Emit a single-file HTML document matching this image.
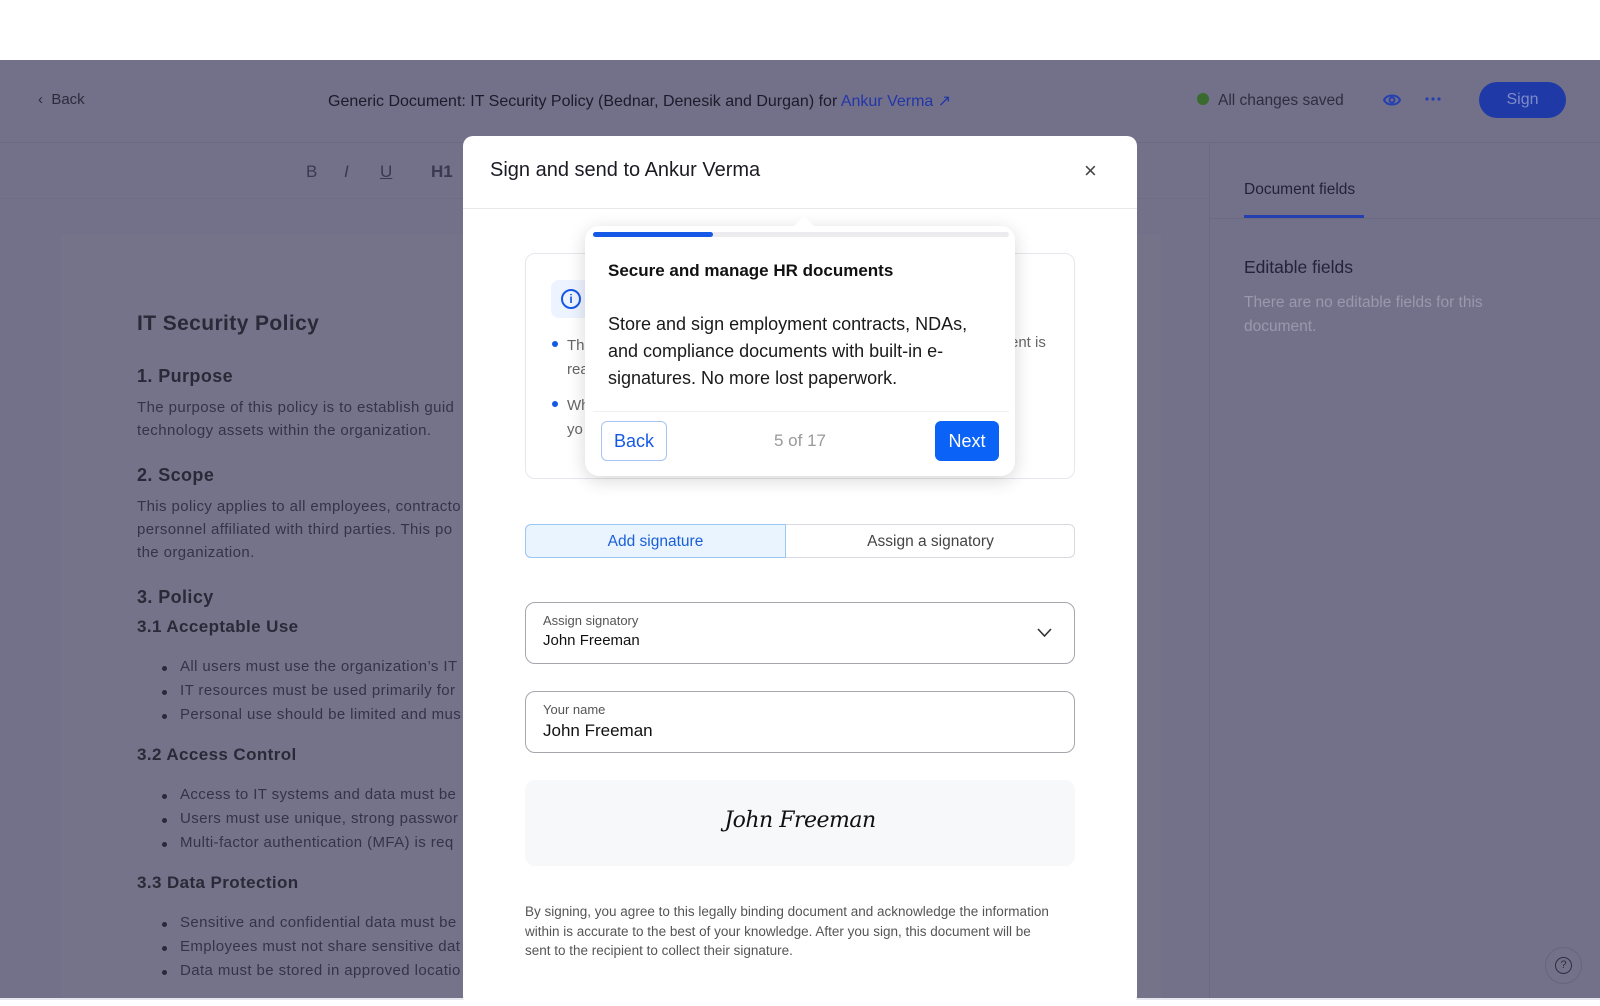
<!DOCTYPE html>
<html><head><meta charset="utf-8"><style>
*{box-sizing:border-box;margin:0;padding:0}
body{width:1600px;height:1000px;overflow:hidden;background:#fff;font-family:"Liberation Sans",sans-serif;position:relative}
.abs{position:absolute;white-space:nowrap}
.ov{position:absolute;left:0;top:60px;width:1600px;height:938px;background:#737189}
.doc{font-family:"Liberation Sans",sans-serif;color:#2a2938;letter-spacing:.4px}
.h2{font-size:18px;font-weight:bold}
.h3{font-size:17px;font-weight:bold}
.p{font-size:15px;color:#34334a}
.li{font-size:15px;color:#34334a}
.li:before{content:"";position:absolute;left:-18px;top:8px;width:5px;height:5px;border-radius:50%;background:#2a2938}
</style></head><body>
<div class="ov"></div>
<!-- header -->
<div class="abs" style="left:38px;top:91px;font-size:15px;color:#2c2b3c">‹&nbsp; Back</div>
<div class="abs" style="left:328px;top:91px;font-size:16px;color:#1c1b2a">Generic Document: IT Security Policy (Bednar, Denesik and Durgan) for <span style="color:#2336a8">Ankur Verma ↗</span></div>
<div class="abs" style="left:1197px;top:93px;width:12px;height:12px;border-radius:50%;background:#3a6a2e"></div>
<div class="abs" style="left:1218px;top:92px;font-size:15.5px;color:#2e2d40">All changes saved</div>
<svg class="abs" style="left:1382px;top:91px" width="20" height="18" viewBox="0 0 20 18"><path d="M2 9C5 3 15 3 18 9C15 15 5 15 2 9Z" fill="none" stroke="#2440b0" stroke-width="2"/><circle cx="10" cy="9" r="2.5" fill="none" stroke="#2440b0" stroke-width="2"/></svg>
<svg class="abs" style="left:1425px;top:97px" width="16" height="4" viewBox="0 0 16 4"><circle cx="2" cy="2" r="1.6" fill="#2440b0"/><circle cx="8" cy="2" r="1.6" fill="#2440b0"/><circle cx="14" cy="2" r="1.6" fill="#2440b0"/></svg>
<div class="abs" style="left:1479px;top:82px;width:87px;height:36px;border-radius:18px;background:#1f3aa6;color:#7f8bc9;font-size:16px;text-align:center;line-height:36px">Sign</div>
<div class="abs" style="left:0;top:142px;width:1600px;height:1px;background:#6b697f"></div>
<!-- toolbar -->
<div class="abs" style="left:306px;top:162px;font-size:17px;color:#3a3950">B</div>
<div class="abs" style="left:344px;top:162px;font-size:17px;color:#3a3950;font-style:italic">I</div>
<div class="abs" style="left:380px;top:162px;font-size:17px;color:#3a3950;text-decoration:underline">U</div>
<div class="abs" style="left:431px;top:162px;font-size:17px;color:#3a3950;font-weight:bold">H1</div>
<div class="abs" style="left:0;top:198px;width:1210px;height:1px;background:#6e6c82"></div>
<!-- doc page -->
<div class="abs" style="left:61px;top:235px;width:1100px;height:763px;background:#757389"></div>
<div class="doc">
<div class="abs" style="left:137px;top:312px;font-size:21px;font-weight:bold">IT Security Policy</div>
<div class="abs h2" style="left:137px;top:366px">1. Purpose</div>
<div class="abs p" style="left:137px;top:396px;line-height:23px">The purpose of this policy is to establish guid<br>technology assets within the organization.</div>
<div class="abs h2" style="left:137px;top:465px">2. Scope</div>
<div class="abs p" style="left:137px;top:495px;line-height:23px">This policy applies to all employees, contracto<br>personnel affiliated with third parties. This po<br>the organization.</div>
<div class="abs h2" style="left:137px;top:587px">3. Policy</div>
<div class="abs h3" style="left:137px;top:617px">3.1 Acceptable Use</div>
<div class="abs li" style="left:180px;top:658px">All users must use the organization’s IT</div>
<div class="abs li" style="left:180px;top:682px">IT resources must be used primarily for</div>
<div class="abs li" style="left:180px;top:706px">Personal use should be limited and mus</div>
<div class="abs h3" style="left:137px;top:745px">3.2 Access Control</div>
<div class="abs li" style="left:180px;top:786px">Access to IT systems and data must be</div>
<div class="abs li" style="left:180px;top:810px">Users must use unique, strong passwor</div>
<div class="abs li" style="left:180px;top:834px">Multi-factor authentication (MFA) is req</div>
<div class="abs h3" style="left:137px;top:873px">3.3 Data Protection</div>
<div class="abs li" style="left:180px;top:914px">Sensitive and confidential data must be</div>
<div class="abs li" style="left:180px;top:938px">Employees must not share sensitive dat</div>
<div class="abs li" style="left:180px;top:962px">Data must be stored in approved locatio</div>
</div>
<!-- right panel -->
<div class="abs" style="left:1209px;top:143px;width:1px;height:855px;background:#6c6a80"></div>
<div class="abs" style="left:1244px;top:181px;font-size:15.5px;color:#23223a">Document fields</div>
<div class="abs" style="left:1244px;top:215px;width:120px;height:3px;background:#2440b0"></div>
<div class="abs" style="left:1210px;top:218px;width:390px;height:1px;background:#6c6a80"></div>
<div class="abs" style="left:1244px;top:257px;font-size:17.5px;color:#23223a">Editable fields</div>
<div class="abs" style="left:1244px;top:291px;font-size:15.5px;line-height:24px;color:#9a98ad">There are no editable fields for this<br>document.</div>
<div class="abs" style="left:1545px;top:947px;width:37px;height:37px;border-radius:50%;border:1px solid #67657c"></div>
<div class="abs" style="left:1555px;top:957px;width:17px;height:17px;border-radius:50%;border:1.5px solid #2e2d40;font-size:11px;text-align:center;line-height:14px;color:#2e2d40">?</div>
<div class="abs" style="left:0;top:998px;width:1600px;height:2px;background:#e6e6ee"></div>
<!-- modal -->
<div class="abs" style="left:463px;top:136px;width:674px;height:870px;background:#fff;border-radius:10px"></div>
<div class="abs" style="left:490px;top:159px;font-size:20px;color:#1b1b24">Sign and send to Ankur Verma</div>
<div class="abs" style="left:1084px;top:158px;font-size:22px;color:#444;font-weight:300">×</div>
<div class="abs" style="left:463px;top:208px;width:674px;height:1px;background:#e8e8ec"></div>
<!-- info card -->
<div class="abs" style="left:525px;top:253px;width:550px;height:226px;border:1px solid #e6e7ec;border-radius:10px"></div>
<div class="abs" style="left:551px;top:280px;width:40px;height:38px;border-radius:8px;background:#eef4ff"></div>
<div class="abs" style="left:561px;top:289px;width:20px;height:20px;border-radius:50%;border:2px solid #1659e6;color:#1659e6;font-size:12px;text-align:center;line-height:16px;font-weight:bold">i</div>
<div class="abs" style="left:552px;top:341px;width:6px;height:6px;border-radius:50%;background:#1659e6"></div>
<div class="abs" style="left:567px;top:334px;font-size:15px;color:#666;line-height:24px">Th<br>rea</div>
<div class="abs" style="left:552px;top:401px;width:6px;height:6px;border-radius:50%;background:#1659e6"></div>
<div class="abs" style="left:567px;top:394px;font-size:15px;color:#666;line-height:24px">Wh<br>yo</div>
<div class="abs" style="left:1010px;top:334px;font-size:15px;color:#666">ent is</div>
<!-- tooltip -->
<div class="abs" style="left:585px;top:226px;width:430px;height:250px;background:#fff;border-radius:14px;box-shadow:0 4px 18px rgba(0,0,0,.16)"></div>
<div class="abs" style="left:797px;top:219px;width:14px;height:14px;background:#fff;transform:rotate(45deg)"></div>
<div class="abs" style="left:593px;top:232px;width:416px;height:5px;background:#ececef;border-radius:3px"></div>
<div class="abs" style="left:593px;top:232px;width:120px;height:5px;background:#1659e6;border-radius:3px"></div>
<div class="abs" style="left:608px;top:261px;font-size:17px;font-weight:bold;color:#111">Secure and manage HR documents</div>
<div class="abs" style="left:608px;top:311px;font-size:18px;line-height:27px;color:#1a1a1a">Store and sign employment contracts, NDAs,<br>and compliance documents with built-in e-<br>signatures. No more lost paperwork.</div>
<div class="abs" style="left:593px;top:411px;width:416px;height:1px;background:#f0f0f2"></div>
<div class="abs" style="left:601px;top:421px;width:66px;height:40px;border:1px solid #a9c4f4;border-radius:6px;color:#1659e6;font-size:18px;text-align:center;line-height:38px">Back</div>
<div class="abs" style="left:760px;top:431px;width:80px;text-align:center;font-size:17px;color:#999">5 of 17</div>
<div class="abs" style="left:935px;top:421px;width:64px;height:40px;background:#0b62f6;border-radius:6px;color:#fff;font-size:18px;text-align:center;line-height:40px">Next</div>
<!-- segmented -->
<div class="abs" style="left:525px;top:524px;width:550px;height:34px;border:1px solid #d7d9de;border-radius:6px"></div>
<div class="abs" style="left:525px;top:524px;width:261px;height:34px;border:1px solid #9cc6f4;background:#e9f4fe;border-radius:6px 0 0 6px;color:#1a5fd8;font-size:15.5px;text-align:center;line-height:33px">Add signature</div>
<div class="abs" style="left:786px;top:524px;width:289px;height:34px;color:#444;font-size:15.5px;text-align:center;line-height:35px">Assign a signatory</div>
<!-- select -->
<div class="abs" style="left:525px;top:602px;width:550px;height:62px;border:1px solid #a6a6ad;border-radius:10px"></div>
<div class="abs" style="left:543px;top:613px;font-size:13px;color:#555">Assign signatory</div>
<div class="abs" style="left:543px;top:632px;font-size:15px;color:#111">John Freeman</div>
<svg class="abs" style="left:1036px;top:627px" width="17" height="11" viewBox="0 0 17 11"><path d="M2 2L8.5 9L15 2" fill="none" stroke="#333" stroke-width="1.6"/></svg>
<!-- name -->
<div class="abs" style="left:525px;top:691px;width:550px;height:62px;border:1px solid #a6a6ad;border-radius:10px"></div>
<div class="abs" style="left:543px;top:702px;font-size:13px;color:#555">Your name</div>
<div class="abs" style="left:543px;top:721px;font-size:17px;color:#111">John Freeman</div>
<!-- signature -->
<div class="abs" style="left:525px;top:780px;width:550px;height:86px;background:#f7f8fa;border-radius:10px"></div>
<div class="abs" style="left:525px;top:808px;width:550px;text-align:center;font-family:'DejaVu Serif','Liberation Serif',serif;font-style:italic;font-size:22px;color:#111;letter-spacing:-.5px">John Freeman</div>
<div class="abs" style="left:525px;top:902px;font-size:13.5px;line-height:19.5px;color:#555">By signing, you agree to this legally binding document and acknowledge the information<br>within is accurate to the best of your knowledge. After you sign, this document will be<br>sent to the recipient to collect their signature.</div>
</body></html>
